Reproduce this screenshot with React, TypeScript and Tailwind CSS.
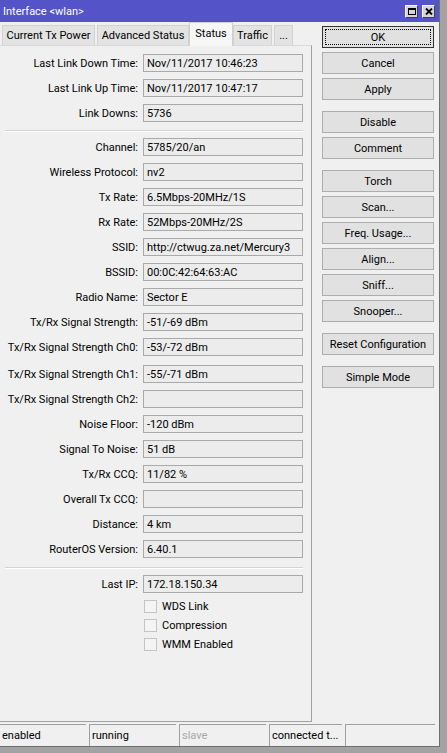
import React from "react";

type Row = { label: string; value: string; extra?: boolean };

const groupA: Row[] = [
  { label: "Last Link Down Time:", value: "Nov/11/2017 10:46:23" },
  { label: "Last Link Up Time:", value: "Nov/11/2017 10:47:17" },
  { label: "Link Downs:", value: "5736" },
];

const groupB: Row[] = [
  { label: "Channel:", value: "5785/20/an" },
  { label: "Wireless Protocol:", value: "nv2" },
  { label: "Tx Rate:", value: "6.5Mbps-20MHz/1S" },
  { label: "Rx Rate:", value: "52Mbps-20MHz/2S" },
  { label: "SSID:", value: "http://ctwug.za.net/Mercury3" },
  { label: "BSSID:", value: "00:0C:42:64:63:AC" },
  { label: "Radio Name:", value: "Sector E" },
  { label: "Tx/Rx Signal Strength:", value: "-51/-69 dBm" },
  { label: "Tx/Rx Signal Strength Ch0:", value: "-53/-72 dBm" },
  { label: "Tx/Rx Signal Strength Ch1:", value: "-55/-71 dBm", extra: true },
  { label: "Tx/Rx Signal Strength Ch2:", value: "" },
  { label: "Noise Floor:", value: "-120 dBm" },
  { label: "Signal To Noise:", value: "51 dB" },
  { label: "Tx/Rx CCQ:", value: "11/82 %" },
  { label: "Overall Tx CCQ:", value: "" },
  { label: "Distance:", value: "4 km" },
  { label: "RouterOS Version:", value: "6.40.1" },
];

const buttonGroups = [
  ["OK", "Cancel", "Apply"],
  ["Disable", "Comment"],
  ["Torch", "Scan...", "Freq. Usage...", "Align...", "Sniff...", "Snooper..."],
  ["Reset Configuration"],
  ["Simple Mode"],
];

const tabs = [
  { name: "Current Tx Power", w: "w-[93px]", ml: "ml-[2px]" },
  { name: "Advanced Status", w: "w-[92px]", ml: "ml-[2px]" },
  { name: "Status", w: "w-[44px]", ml: "ml-0", active: true },
  { name: "Traffic", w: "w-[39px]", ml: "ml-0" },
  { name: "...", w: "w-[19px]", ml: "ml-[2px]" },
];

function Field({ label, value, extra }: Row) {
  return (
    <div className={`flex h-[18px] items-center ${extra ? "mt-[2px]" : ""}`}>
      <div className="w-[138px] whitespace-nowrap text-right">{label}</div>
      <div className="ml-[5px] flex h-[18px] w-[160px] items-center border border-[#a9a9a9] bg-[#ececec] pl-[3px] whitespace-nowrap">
        {value}
      </div>
    </div>
  );
}

function Separator({ className }: { className: string }) {
  return (
    <div className={`ml-[5px] w-[298px] ${className}`}>
      <div className="h-px bg-[#d4d4d4]" />
      <div className="h-px bg-white" />
    </div>
  );
}

function Check({ label }: { label: string }) {
  return (
    <div className="flex h-[13px] items-center">
      <div className="ml-[144px] h-[13px] w-[13px] border border-[#c4c4c4] bg-[#f4f4f4]" />
      <span className="ml-[5px]">{label}</span>
    </div>
  );
}

function SideButton({ label, focused }: { label: string; focused?: boolean }) {
  return (
    <div
      className={`relative flex h-[22px] w-[112px] items-center justify-center border bg-[#e1e1e1] ${
        focused ? "border-[#333333]" : "border-[#adadad]"
      }`}
    >
      {focused && (
        <div className="absolute inset-[2px] border border-dotted border-black" />
      )}
      {label}
    </div>
  );
}

const statusCells = [
  { text: "enabled", w: "w-[86px]", first: true },
  { text: "running", w: "w-[87px]" },
  { text: "slave", w: "w-[87px]", dim: true },
  { text: "connected t...", w: "w-[73px]" },
  { text: "", w: "w-[90px]" },
];

export default function App() {
  return (
    <div className="h-[753px] w-[447px] overflow-hidden bg-[#a3a3a3] font-[Roboto,sans-serif] text-[11px] leading-none text-black">
      <div className="flex h-[747px] w-[440px] flex-col border-r border-b border-[#6e6e6e] bg-[#f0f0f0]">
        {/* title bar */}
        <div className="flex h-[22px] items-center bg-[#5454c8] pl-[3px] pr-[4px] text-[11px] text-white">
          <span>Interface &lt;wlan&gt;</span>
          <div className="ml-auto flex gap-[4px]">
            <div className="flex h-[13px] w-[13px] items-center justify-center border-t border-l border-[#f4f4f4] border-r-[#404040] border-b-[#404040] border-r border-b bg-[#d6d6d6]">
              <div className="h-[7px] w-[8px] border border-t-2 border-black" />
            </div>
            <div className="flex h-[13px] w-[13px] items-center justify-center border-t border-l border-[#f4f4f4] border-r-[#404040] border-b-[#404040] border-r border-b bg-[#d6d6d6]">
              <svg width="8" height="7" viewBox="0 0 8 7">
                <path d="M1 0.5 L7 6.5 M7 0.5 L1 6.5" stroke="black" strokeWidth="1.8" />
              </svg>
            </div>
          </div>
        </div>

        <div className="flex flex-1">
          {/* left: tabs + panel */}
          <div className="flex w-[312px] flex-col">
            <div className="flex h-[23px] items-end">
              {tabs.map((t) =>
                t.active ? (
                  <div
                    key={t.name}
                    className={`${t.w} ${t.ml} relative z-10 -mb-px flex h-[24px] items-center justify-center border border-b-0 border-[#d0d0d0] bg-[#f7f7f7] pb-[2px]`}
                  >
                    {t.name}
                  </div>
                ) : (
                  <div
                    key={t.name}
                    className={`${t.w} ${t.ml} flex h-[20px] items-center justify-center border border-b-0 border-[#d2d2d2] bg-[#e3e3e3]`}
                  >
                    {t.name}
                  </div>
                )
              )}
            </div>
            <div className="flex flex-1 flex-col border-t border-r border-b border-t-[#d9d9d9] border-r-[#a0a0a0] border-b-[#a0a0a0] pt-[8px]">
              <div className="flex flex-col gap-[7px]">
                {groupA.map((r) => (
                  <Field key={r.label} {...r} />
                ))}
              </div>
              <Separator className="mt-[8px] mb-[6px]" />
              <div className="flex flex-col gap-[7px]">
                {groupB.map((r) => (
                  <Field key={r.label} {...r} />
                ))}
              </div>
              <Separator className="mt-[9px] mb-[6px]" />
              <Field label="Last IP:" value="172.18.150.34" />
              <div className="mt-[7px] flex flex-col gap-[6px]">
                <Check label="WDS Link" />
                <Check label="Compression" />
                <Check label="WMM Enabled" />
              </div>
            </div>
          </div>

          {/* right: buttons */}
          <div className="ml-[10px] flex flex-col gap-[11px] pt-[4px]">
            {buttonGroups.map((g, i) => (
              <div key={i} className="flex flex-col gap-[4px]">
                {g.map((b) => (
                  <SideButton key={b} label={b} focused={b === "OK"} />
                ))}
              </div>
            ))}
          </div>
        </div>

        {/* status bar */}
        <div className="mt-[2px] flex h-[22px] gap-[3px]">
          {statusCells.map((c, i) => (
            <div
              key={i}
              className={`${c.w} flex items-center border-t border-[#a0a0a0] pl-[2px] ${
                c.first ? "" : "border-l"
              } ${c.dim ? "text-[#a8a8a8]" : ""}`}
            >
              {c.text}
            </div>
          ))}
        </div>
      </div>
    </div>
  );
}
